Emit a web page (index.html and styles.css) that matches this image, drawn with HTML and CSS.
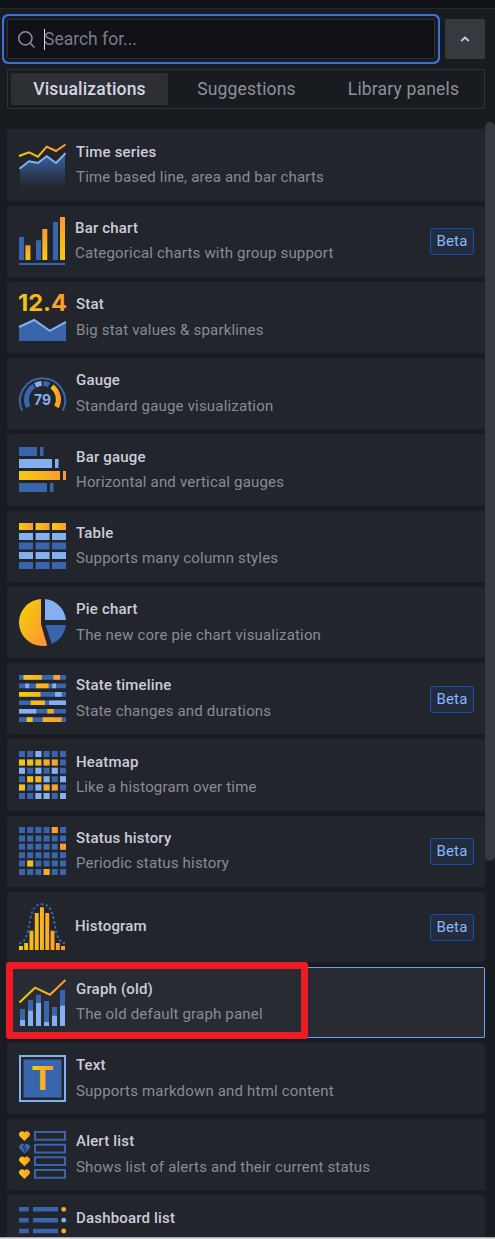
FILE: index.html
```html
<!DOCTYPE html>
<html lang="en">
<head>
<meta charset="utf-8">
<title>Visualizations</title>
<link rel="stylesheet" href="styles.css">
</head>
<body>
<svg class="defs" width="0" height="0" aria-hidden="true">
  <defs>
    <linearGradient id="warm" gradientUnits="userSpaceOnUse" x1="0" y1="0" x2="47" y2="0"><stop offset="0" stop-color="#f2cc0c"/><stop offset="1" stop-color="#ff9830"/></linearGradient>
    <linearGradient id="warmEach" x1="0" y1="0" x2="1" y2="0"><stop offset="0" stop-color="#f2cc0c"/><stop offset="1" stop-color="#ff9830"/></linearGradient>
    <linearGradient id="warmUp" x1="0" y1="1" x2="0" y2="0"><stop offset="0" stop-color="#f2cc0c"/><stop offset="1" stop-color="#ff9830"/></linearGradient>
    <linearGradient id="warmPie" x1="0" y1="0.3" x2="0.7" y2="1"><stop offset="0" stop-color="#f2cc0c"/><stop offset="1" stop-color="#ff9830"/></linearGradient>
    <linearGradient id="fade" x1="0" y1="0" x2="0" y2="1"><stop offset="0" stop-color="#3865ab"/><stop offset="1" stop-color="#3865ab" stop-opacity="0"/></linearGradient>
    <path id="heart" d="M5.5 10 0.9 5.4A2.9 2.9 0 0 1 5.5 1.4 2.9 2.9 0 0 1 10.1 5.4Z"/>
    <path id="cellgrid" d="M0 3H47M0 11.4H47M0 19.8H47M0 28.2H47M0 36.6H47M0 45H47" fill="none" stroke="#3865ab" stroke-width="6" stroke-dasharray="6 2.2"/>
  </defs>
</svg>
<div class="topbar"></div>
<main class="pane">
  <div class="search-row">
    <div class="search">
      <svg class="search-icon" width="17" height="17" viewBox="0 0 18 18"><circle cx="7.8" cy="7.8" r="7" /><path d="M12.8 12.8 16.9 16.9"/></svg>
      <span class="caret"></span><span class="placeholder">Search for...</span>
    </div>
    <div class="collapse"><svg width="10" height="6" viewBox="0 0 10 6"><path d="M1.2 5 5 1.5 8.8 5"/></svg></div>
  </div>
  <nav class="tabs">
    <div class="tab active">Visualizations</div>
    <div class="tab">Suggestions</div>
    <div class="tab">Library panels</div>
  </nav>
  <section class="list">
    <div class="card tall">
      <svg class="icon" viewBox="0 0 47 48"><path fill="url(#fade)" d="M1 27 10 19.3 19 21 27.7 14.3 37 21 46 12V46H1Z"/><path class="line light" d="M0.5 27.7 10 20.3 19 22 27.7 15.3 37 22 46.5 12.3"/><path class="line" stroke="url(#warm)" d="M0 15 10 11.3 19 15.7 27.7 5.7 37 10 46.5 3.5"/></svg>
      <div class="info"><div class="title">Time series</div><div class="desc">Time based line, area and bar charts</div></div>
    </div>
    <div class="card nudge">
      <svg class="icon" viewBox="0 0 47 48"><path class="blue" d="M0 19h5v23h-5zM17 22.3h5V42h-5zM34 4h5v38h-5zM0 45h46v2H0z"/><path fill="url(#warmUp)" d="M6.4 27.3h5V42h-5z"/><path fill="url(#warmUp)" d="M23.3 11h5v31h-5z"/><path fill="url(#warmUp)" d="M41-1h5v43h-5z"/></svg>
      <div class="info"><div class="title">Bar chart</div><div class="desc">Categorical charts with group support</div></div>
      <span class="badge">Beta</span>
    </div>
    <div class="card loose">
      <svg class="icon" viewBox="0 0 47 48"><text x="-1" y="17.3" class="stat-num" textLength="49" lengthAdjust="spacingAndGlyphs" fill="url(#warm)">12.4</text><path class="blue" d="M0 33 15.3 26 30.7 37 47 28V47H0Z"/><path class="line light" d="M0 33 15.3 26 30.7 36.8 47 28"/></svg>
      <div class="info"><div class="title">Stat</div><div class="desc">Big stat values &amp; sparklines</div></div>
    </div>
    <div class="card loose">
      <svg class="icon" viewBox="0 0 47 48"><path d="M3.2 40.8A22.6 22.6 0 1 1 43.8 40.8" fill="none" stroke="#3865ab" stroke-width="2"/>
        <g fill="none" stroke-width="5" transform="translate(23.5 29.5)"><circle r="16" pathLength="360" stroke="#3865ab" stroke-dasharray="86 274" transform="rotate(152)"/><circle r="16" pathLength="360" stroke="#84aff1" stroke-dasharray="24 336" transform="rotate(243)"/><circle r="16" pathLength="360" stroke="#3865ab" stroke-dasharray="21 339" transform="rotate(273)"/><path d="M9.4 -12.9A16 16 0 0 1 14.1 7.5" stroke="url(#warmEach)"/></g>
        <text x="15" y="35" class="gauge-num" textLength="17" lengthAdjust="spacingAndGlyphs">79</text></svg>
      <div class="info"><div class="title">Gauge</div><div class="desc">Standard gauge visualization</div></div>
    </div>
    <div class="card tall">
      <svg class="icon" viewBox="0 0 47 48"><path class="blue" d="M0 1h18v9H0zM21 1h3.5v9H21zM0 37h28v9H0zM31 37h3.5v9H31z"/><path class="pale" d="M0 13h33v9H0zM36 13h3.5v9H36z"/><path fill="url(#warm)" d="M0 25h41v9H0zM44 25h3v9h-3z"/></svg>
      <div class="info"><div class="title">Bar gauge</div><div class="desc">Horizontal and vertical gauges</div></div>
    </div>
    <div class="card">
      <svg class="icon" viewBox="0 0 47 48"><g fill="url(#warmEach)"><rect width="14" height="7"/><rect x="16.6" width="14" height="7"/><rect x="33" width="14" height="7"/></g><path class="pale" d="M0 10h14v7H0zM16.6 10h14v7h-14zM33 10h14v7H33zM0 29h14v7H0zM16.6 29h14v7h-14zM33 29h14v7H33z"/><path class="blue" d="M0 19.4h14v7H0zM16.6 19.4h14v7h-14zM33 19.4h14v7H33zM0 39h14v7H0zM16.6 39h14v7h-14zM33 39h14v7H33z"/></svg>
      <div class="info"><div class="title">Table</div><div class="desc">Supports many column styles</div></div>
    </div>
    <div class="card loose">
      <svg class="icon" viewBox="0 0 47 48"><path fill="url(#warmPie)" d="M22 0A23.5 23.5 0 0 0 0 23.5 23.5 23.5 0 0 0 23.5 47Q26 47 28.2 46.5L22 25.3Z"/><path class="pale" d="M26 0A23.5 23.5 0 0 1 47 21H26Z"/><path class="blue" d="M26.6 26H47A23.5 23.5 0 0 1 32.7 45Z"/></svg>
      <div class="info"><div class="title">Pie chart</div><div class="desc">The new core pie chart visualization</div></div>
    </div>
    <div class="card loose">
      <svg class="icon" viewBox="0 0 47 48"><path class="blue" d="M0 0h47v4.7H0zM0 8.5h47v4.7H0zM0 17h47v4.7H0zM0 25.4h47v4.7H0zM0 33.9h47v4.7H0zM0 42.3h47V47H0z"/><path fill="url(#warm)" d="M4.5 0h18.3v4.7H4.5zM34.5 0H41v4.7h-6.5zM17 8.5h12.7v4.7H17zM0 17h21.5v4.7H0zM11.7 25.4H26v4.7H11.7zM28.3 33.9h6.5v4.7h-6.5zM7.7 42.3h6V47h-6zM23.7 42.3h19V47h-19z"/><path class="pale" d="M6.3 8.5H10v4.7H6.3zM33.3 8.5H37v4.7h-3.7zM36 17h6.7v4.7H36zM30 25.4h17v4.7H30zM0 33.9h17.3v4.7H0z"/></svg>
      <div class="info"><div class="title">State timeline</div><div class="desc">State changes and durations</div></div>
      <span class="badge low">Beta</span>
    </div>
    <div class="card tall">
      <svg class="icon" viewBox="0 0 47 48"><use href="#cellgrid"/><path class="pale" d="M16.4 0h6v6h-6zM0 16.8h6v6H0zM16.4 16.8h6v6h-6zM32.8 16.8h6v6h-6zM24.6 25.2h6v6h-6zM41 25.2h6v6h-6zM16.4 33.6h6v6h-6zM16.4 42h6v6h-6zM24.6 42h6v6h-6zM41 42h6v6h-6z"/><path fill="url(#warm)" d="M0 8.4h6v6H0zM8.2 8.4h6v6h-6zM16.4 8.4h6v6h-6zM24.6 8.4h6v6h-6zM32.8 8.4h6v6h-6zM8.2 25.2h6v6h-6zM16.4 25.2h6v6h-6zM0 33.6h6v6H0zM24.6 33.6h6v6h-6zM32.8 33.6h6v6h-6z"/></svg>
      <div class="info"><div class="title">Heatmap</div><div class="desc">Like a histogram over time</div></div>
    </div>
    <div class="card">
      <svg class="icon" viewBox="0 0 47 48"><g transform="translate(0 -1)"><use href="#cellgrid"/><path fill="url(#warm)" d="M32.8 0h6v6h-6zM41 16.8h6v6h-6zM8.2 33.6h6v6h-6zM24.6 42h6v6h-6z"/></g></svg>
      <div class="info"><div class="title">Status history</div><div class="desc">Periodic status history</div></div>
      <span class="badge">Beta</span>
    </div>
    <div class="card nudge single">
      <svg class="icon" viewBox="0 0 47 48"><path fill="url(#warm)" d="M0 42h3.9v4H0zM5.2 39h3.9v7H5.2zM10.5 26.7h3.9V46h-3.9zM15.8 9h3.9v37h-3.9zM21 3.3h3.9V46H21zM26.3 9h3.9v37h-3.9zM31.6 26.7h3.9V46h-3.9zM36.9 39h3.9v7h-3.9zM42.1 42H46v4h-3.9z"/><path d="M0 39.4C8 38 9 27 11 17 13 5 16 0.2 22.8 0.2S33 5 35 17C37 27 38 38 46 39.4" fill="none" stroke="#3865ab" stroke-width="2" stroke-dasharray="2.6 2.2"/></svg>
      <div class="info"><div class="title">Histogram</div></div>
      <span class="badge">Beta</span>
    </div>
    <div class="card selected">
      <svg class="icon" viewBox="0 0 47 48"><path class="blue" d="M1 30h5v11H1zM9 21h5v11H9zM17 15.7h5v9h-5zM25 22h5v21h-5zM33 28h5v9h-5zM41 11h5v16h-5z"/><path class="pale" d="M1 41h5v6H1zM9 31.7h5V47H9zM17 24h5v23h-5zM25 43h5v4h-5zM33 36.7h5V47h-5zM41 26.7h5V47h-5z"/><path class="line" stroke="url(#warm)" d="M0.5 23.5 16 8.7 31 15.7 46.5 1"/></svg>
      <div class="info"><div class="title">Graph (old)</div><div class="desc">The old default graph panel</div></div>
      <div class="marker"></div>
    </div>
    <div class="card loose">
      <svg class="icon" viewBox="0 0 47 48"><rect x="1" y="1" width="45" height="45" fill="none" stroke="#84aff1" stroke-width="2"/><rect class="blue" x="4.5" y="4.5" width="38" height="38"/><text x="12" y="35.2" class="big-t" textLength="23" lengthAdjust="spacingAndGlyphs" fill="url(#warmEach)">T</text></svg>
      <div class="info"><div class="title">Text</div><div class="desc">Supports markdown and html content</div></div>
    </div>
    <div class="card loose">
      <svg class="icon" viewBox="0 0 47 48"><g fill="url(#warmEach)"><use href="#heart"/><use href="#heart" y="25.3"/><use href="#heart" y="38"/></g><use href="#heart" y="12.7" class="blue"/><path d="M5.5 13.5 4.5 17 6.8 17.5 5.5 20.5" fill="none" stroke="#22252b"/><path fill="none" stroke="#3865ab" stroke-width="2" d="M16 1h30v7.7H16zM16 13.7h30v7.7H16zM16 26.3h30V34H16zM16 39h30v7.7H16z"/></svg>
      <div class="info"><div class="title">Alert list</div><div class="desc">Shows list of alerts and their current status</div></div>
    </div>
    <div class="card tall">
      <svg class="icon" viewBox="0 0 47 48"><path class="blue" d="M0 0h9.7v4.5H0zM14 0h25v4.5H14zM0 11h9.7v4.5H0zM14 11h25v4.5H14zM0 21.7h9.7v4.5H0zM14 21.7h25v4.5H14z"/><circle cx="44.7" cy="2.3" r="2.4" fill="#ffab22"/><circle class="pale" cx="44.7" cy="13.2" r="2.4"/><circle cx="44.7" cy="24" r="2.4" fill="#ffab22"/></svg>
      <div class="info"><div class="title">Dashboard list</div></div>
    </div>
    <div class="scrollbar"></div>
  </section>
</main>
<div class="bottom-edge"></div>
</body>
</html>
```
FILE: styles.css
```css
* { box-sizing: border-box; }
body {
  margin: 0;
  height: 1239px;
  overflow: hidden;
  display: flex;
  flex-direction: column;
  background: #181b1f;
  color: #ccccdc;
  font-family: Roboto, "Liberation Sans", sans-serif;
}
.defs { position: absolute; }
.topbar { flex: none; height: 9px; background: #111217; border-bottom: 1px solid #25282d; }
.pane { flex: 1; min-height: 0; overflow: hidden; padding: 10px 10px 0 7px; }
.search-row { display: flex; gap: 10px; height: 40px; }
.search {
  width: 428px;
  display: flex;
  align-items: center;
  padding-left: 10px;
  background: #111217;
  border: 1px solid #2d2f34;
  border-radius: 2px;
  box-shadow: 0 0 0 3px #181b1f, 0 0 0 5px #3d71d9;
}
.search-icon { fill: none; stroke: #8e8f99; stroke-width: 1.6; stroke-linecap: round; }
.caret { width: 1px; height: 21px; margin-left: 9px; background: #e0e0ec; }
.placeholder { font-size: 17.5px; line-height: 20px; color: #7b7c86; margin-left: -1px; }
.collapse { width: 40px; display: flex; align-items: center; justify-content: center; background: #36393e; border-radius: 2px; }
.collapse svg { fill: none; stroke: #ccccdc; stroke-width: 1.7; }
.tabs {
  width: 478px;
  height: 40px;
  margin-top: 10px;
  padding: 3px;
  display: grid;
  grid-template-columns: 157px 157px 157px;
  border: 1px solid #303338;
  border-radius: 2px;
}
.tab { font-size: 17.5px; line-height: 32px; text-align: center; color: #8e8f99; letter-spacing: 0.18px; border-radius: 2px; white-space: nowrap; }
.tab.active { background: #2c2f33; color: #d5d5e4; font-weight: 500; }
.list {
  position: relative;
  width: 478px;
  margin-top: 20px;
  display: grid;
  grid-template-rows: 72px 71px 71px 71px 72px 71px 71px 71px 72px 71px 70px 71px 71px 71px 71px;
  row-gap: 5px;
}
.card { display: flex; align-items: center; padding: 0 11px 0 12px; background: #22252b; border-radius: 2px; }
.icon { flex: none; align-self: flex-start; width: 47px; height: 48px; margin-top: 12px; overflow: visible; }
.info { flex: 1; align-self: flex-start; padding-top: 10px; margin-left: 10px; }
.nudge .info { margin-left: 9px; }
.tall .info { padding-top: 11px; }
.single .info { padding-top: 22px; }
.title { font-size: 15px; font-weight: 500; line-height: 24px; letter-spacing: 0.18px; color: #ccccdc; }
.desc { font-size: 15px; line-height: 24px; margin-top: 1px; letter-spacing: 0.18px; color: #8a8b95; white-space: nowrap; }
.loose .desc { margin-top: 2px; }
.badge {
  width: 44px;
  height: 27px;
  border: 1px solid #1250b0;
  border-radius: 3px;
  background: #222c3d;
  color: #8ab8ff;
  font-size: 15px;
  line-height: 25px;
  text-align: center;
  letter-spacing: 0.16px;
}
.badge.low { margin-top: 2px; }
.selected { position: relative; background: #282b32; box-shadow: inset 0 0 0 1px #6e9fff; }
.marker { position: absolute; left: -1px; top: -5px; width: 302px; height: 77px; border: 7px solid #ed1c24; border-radius: 3px; }
.scrollbar { position: absolute; left: 478px; top: -7px; width: 10px; height: 739px; border-radius: 5px; background: #36393d; }
.bottom-edge { flex: none; height: 2px; background: linear-gradient(#a9a9ab 50%, #d8d8d8 50%); }
.blue { fill: #3865ab; }
.pale { fill: #84aff1; }
.line { fill: none; stroke-width: 2; }
.line.light { stroke: #84aff1; }
.stat-num { font: 700 23.5px Inter, sans-serif; }
.gauge-num { font: 700 14px Inter, sans-serif; fill: #84aff1; }
.big-t { font: 700 32px Inter, sans-serif; }
```
